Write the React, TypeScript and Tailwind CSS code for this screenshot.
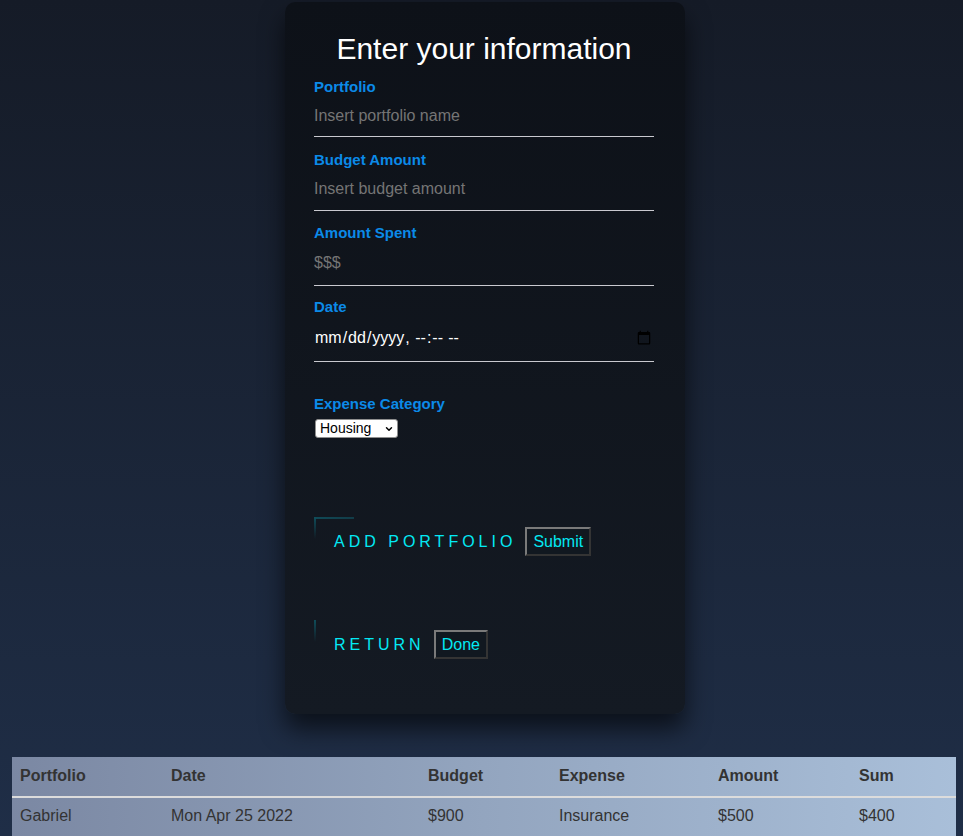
import { ChevronDown } from "lucide-react";

const rows = [
  {
    portfolio: "Gabriel",
    date: "Mon Apr 25 2022",
    budget: "$900",
    expense: "Insurance",
    amount: "$500",
    sum: "$400",
  },
];

const headers = [
  { label: "Portfolio", width: "w-[151px]" },
  { label: "Date", width: "w-[257px]" },
  { label: "Budget", width: "w-[131px]" },
  { label: "Expense", width: "w-[159px]" },
  { label: "Amount", width: "w-[141px]" },
  { label: "Sum", width: "w-[105px]" },
];

function Field({
  label,
  placeholder,
  className,
  inputClass,
}: {
  label: string;
  placeholder: string;
  className: string;
  inputClass: string;
}) {
  return (
    <div className={`${className} flex flex-col`}>
      <label className="text-[15px] leading-[15px] font-bold text-[#0b8ae8]">{label}</label>
      <input
        type="text"
        placeholder={placeholder}
        className={`${inputClass} bg-transparent border-0 border-b border-[#c9c9cf] text-base text-white placeholder:text-[#757575] outline-none`}
      />
    </div>
  );
}

function GlowButton({ text, button, corner }: { text: string; button: string; corner: boolean }) {
  return (
    <div className="relative inline-flex items-baseline self-start px-5 py-[10px] text-[#03e9f4] uppercase tracking-[4px] text-base">
      {corner && (
        <span className="absolute left-0 top-0 h-[2px] w-[40px] bg-gradient-to-r from-[#0f4a57] to-[#123c48]" />
      )}
      <span className="absolute left-0 top-0 h-[22px] w-[2px] bg-gradient-to-b from-[#0f4d5a] to-transparent" />
      <span>{text}</span>
      <button className="ml-[9px] h-[29px] px-[6px] tracking-normal normal-case text-[#03e9f4] bg-[#111820] border-2 border-t-[#7a7a7a] border-l-[#7a7a7a] border-b-[#343434] border-r-[#343434]">
        {button}
      </button>
    </div>
  );
}

export default function App() {
  return (
    <div
      className="min-h-screen bg-gradient-to-b from-[#151b27] to-[#1f2e47] overflow-hidden"
      style={{ fontFamily: '"Liberation Sans", Arial, sans-serif' }}
    >
      <div className="flex justify-center pl-[7px] pt-[2px]">
        <div className="w-[400px] h-[712px] rounded-[10px] bg-gradient-to-b from-[#0d1118] to-[#141a23] shadow-[0_15px_25px_rgba(0,0,0,0.6)] pl-[29px] pr-[31px] pt-[31px] flex flex-col">
          <h1 className="text-center text-[30px] leading-[32px] text-white">Enter your information</h1>
          <Field label="Portfolio" placeholder="Insert portfolio name" className="mt-[14px]" inputClass="h-[42px] mt-px" />
          <Field label="Budget Amount" placeholder="Insert budget amount" className="mt-[15px]" inputClass="h-[43px] mt-px" />
          <Field label="Amount Spent" placeholder="$$$" className="mt-[14px]" inputClass="h-[45px] mt-px" />
          <div className="mt-[13px] flex flex-col">
            <label className="text-[15px] leading-[15px] font-bold text-[#0b8ae8]">Date</label>
            <input
              type="datetime-local"
              className="mt-px h-[47px] bg-transparent border-0 border-b border-[#c9c9cf] text-base text-white outline-none"
            />
          </div>
          <div className="mt-[34px] flex flex-col">
            <label className="text-[15px] leading-[15px] font-bold text-[#0b8ae8]">Expense Category</label>
            <div className="relative mt-[8px] ml-px inline-flex self-start">
              <select className="appearance-none w-[83px] h-[19px] rounded-[3px] bg-white border border-[#8f8f8f] pl-[4px] text-sm leading-[17px] text-black outline-none">
                <option>Housing</option>
                <option>Transportation</option>
                <option>Food</option>
                <option>Insurance</option>
              </select>
              <ChevronDown className="pointer-events-none absolute right-[4px] top-[5px] h-[10px] w-[10px] text-black" strokeWidth={3.5} />
            </div>
          </div>
          <div className="mt-[79px] flex flex-col">
            <GlowButton text="Add Portfolio" button="Submit" corner />
          </div>
          <div className="mt-[54px] flex flex-col">
            <GlowButton text="Return" button="Done" corner={false} />
          </div>
        </div>
      </div>

      <table className="mt-[43px] ml-[12px] w-[944px] table-fixed border-collapse bg-gradient-to-r from-[#7b88a3] via-[#93a5bf] to-[#a9bfd9] text-[#333] text-base">
        <thead>
          <tr className="border-b-2 border-[#dcdcdc]">
            {headers.map((h) => (
              <th key={h.label} className={`${h.width} text-left font-bold pl-2 pt-[9px] pb-[11px] leading-[19px]`}>
                {h.label}
              </th>
            ))}
          </tr>
        </thead>
        <tbody>
          {rows.map((r) => (
            <tr key={r.portfolio}>
              <td className="pl-2 pt-[9px] pb-[11px] leading-[18px]">{r.portfolio}</td>
              <td className="pl-2 pt-[9px] pb-[11px] leading-[18px]">{r.date}</td>
              <td className="pl-2 pt-[9px] pb-[11px] leading-[18px]">{r.budget}</td>
              <td className="pl-2 pt-[9px] pb-[11px] leading-[18px]">{r.expense}</td>
              <td className="pl-2 pt-[9px] pb-[11px] leading-[18px]">{r.amount}</td>
              <td className="pl-2 pt-[9px] pb-[11px] leading-[18px]">{r.sum}</td>
            </tr>
          ))}
        </tbody>
      </table>
    </div>
  );
}
